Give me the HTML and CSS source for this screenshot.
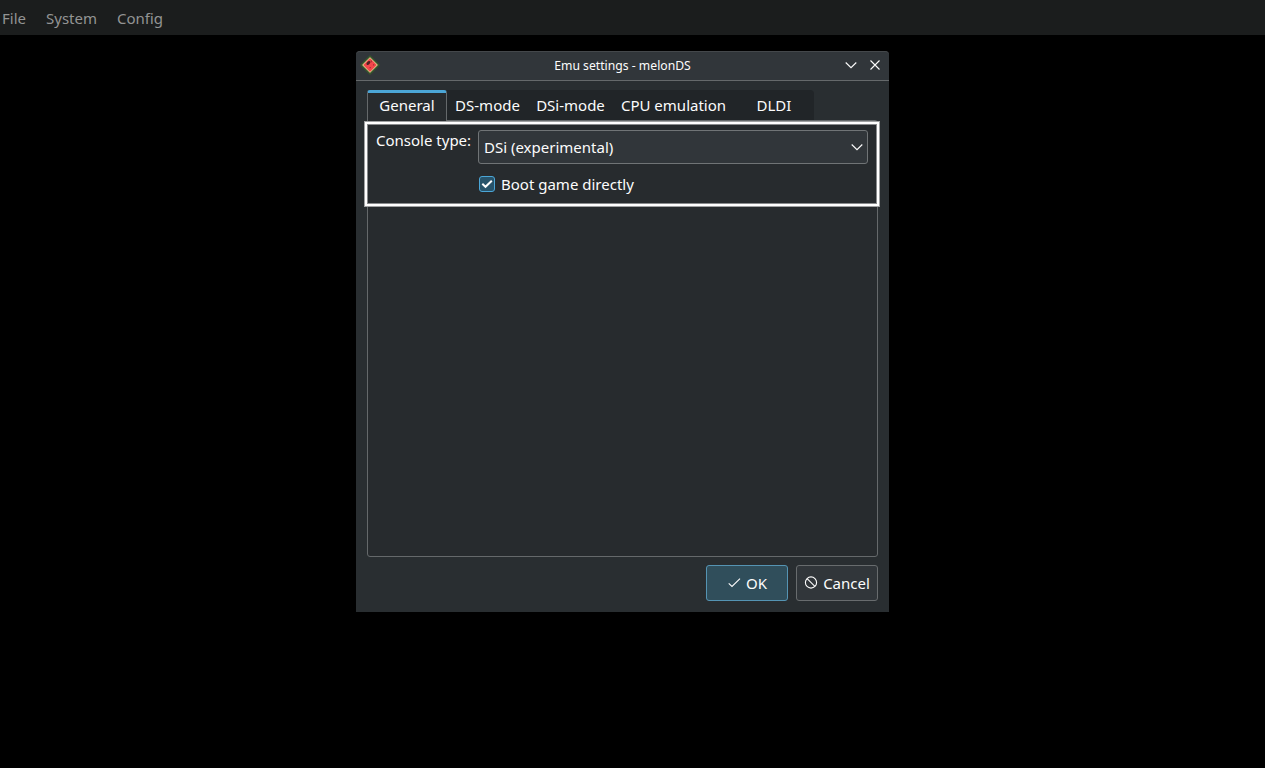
FILE: index.html
```html
<!DOCTYPE html>
<html lang="en">
<head>
<meta charset="utf-8">
<title>Emu settings - melonDS</title>
<link rel="stylesheet" href="styles.css">
</head>
<body>
<nav class="menubar"><span>File</span><span>System</span><span>Config</span></nav>
<main class="window">
  <header class="titlebar">
    <svg class="logo" width="20" height="20" viewBox="0 0 20 20">
      <path d="M10 1 19 10 10 19 1 10Z" fill="#456a38" stroke="#36552c" stroke-width="1.6" stroke-linejoin="round"/>
      <path d="M10 2.9 17.1 10 10 17.1 2.9 10Z" fill="#dfc08a" stroke="#dfc08a" stroke-linejoin="round"/>
      <path d="M10 4.4 15.6 10 10 15.6 4.4 10Z" fill="#f3474b" stroke="#f3474b" stroke-width="1.6" stroke-linejoin="round"/>
      <path d="M11.3 5.6v1.6M13.6 9.2v1.2M9.6 12.6h1.2" stroke="#a52e33" stroke-width="1.2"/>
      <ellipse cx="8.4" cy="8" rx="2.3" ry="1.5" transform="rotate(-45 8.4 8)" fill="#4d2022"/>
    </svg>
    <h1 class="title">Emu settings - melonDS</h1>
    <div class="controls">
      <svg width="12" height="12" viewBox="0 0 12 12"><path d="M.7 3.5 6 8.7 11.3 3.5"/></svg>
      <svg width="12" height="12" viewBox="0 0 12 12"><path d="M1.5 1.5l9 9M10.5 1.5l-9 9"/></svg>
    </div>
  </header>
  <div class="tabs">
    <div class="tab active">General</div>
    <div class="tab ds">DS-mode</div>
    <div class="tab dsi">DSi-mode</div>
    <div class="tab cpu">CPU emulation</div>
    <div class="tab dldi">DLDI</div>
  </div>
  <section class="panel">
    <div class="highlight"></div>
    <div class="form">
      <label class="label">Console type:</label>
      <div class="select"><span>DSi (experimental)</span>
        <svg width="12" height="12" viewBox="0 0 12 12"><path d="M.7 3.5 6 8.7 11.3 3.5"/></svg>
      </div>
      <div class="check">
        <span class="box"><svg width="14" height="14" viewBox="0 0 14 14"><path d="M2.3 6.7 5.5 9.8 11.8 3.8"/></svg></span>
        <span>Boot game directly</span>
      </div>
    </div>
  </section>
  <footer class="actions">
    <div class="button ok"><svg width="14" height="14" viewBox="0 0 14 14"><path d="M1.7 7.3 5 10.5 13 2.7"/></svg>OK</div>
    <div class="button cancel"><svg width="14" height="14" viewBox="0 0 14 14"><circle cx="7" cy="6.5" r="5.6"/><path d="M3.1 2.6l7.8 7.8"/></svg>Cancel</div>
  </footer>
</main>
</body>
</html>
```
FILE: styles.css
```css
* { box-sizing: border-box; }
body {
  margin: 0;
  height: 768px;
  overflow: hidden;
  background: #000;
  color: #fcfcfc;
  font: 15px/20px "Noto Sans", sans-serif;
}
svg { display: block; flex: none; fill: none; stroke: #fcfcfc; stroke-width: 1.1; }
.menubar {
  display: flex;
  gap: 20px;
  height: 35px;
  padding: 8px 0 0 2px;
  background: #1b1d1d;
  color: #939494;
}
.window {
  width: 533px;
  height: 561px;
  margin: 16px 0 0 356px;
  background: #292e31;
  border-radius: 4px 4px 0 0;
}
.titlebar {
  display: grid;
  grid-template-columns: 56px 1fr 56px;
  align-items: start;
  height: 30px;
  padding: 3px 0 0 4px;
  background: #31363a;
  border-top: 1px solid #44484b;
  border-bottom: 1px solid #65696b;
  border-radius: 4px 4px 0 0;
}
.logo { stroke: none; }
.title {
  margin: 0 4px 0 0;
  padding-top: 1px;
  font-size: 12.2px;
  line-height: 19px;
  font-weight: 400;
  text-align: center;
}
.controls { display: flex; gap: 12px; padding: 4px 0 0 12px; }
.tabs {
  display: flex;
  width: 447px;
  height: 30px;
  margin: 9px 0 0 11px;
  background: #212528;
  border-radius: 4px 4px 0 0;
}
.tab { height: 30px; padding-top: 5px; text-align: center; white-space: nowrap; }
.active {
  position: relative;
  z-index: 1;
  width: 80px;
  height: 31px;
  padding-top: 2px;
  background: #272b2e;
  border: 1px solid #65696b;
  border-top: 3px solid #4ba6d7;
  border-bottom: 0;
  border-radius: 3px 3px 0 0;
}
.ds { width: 81px; }
.dsi { width: 85px; }
.cpu { width: 121px; }
.dldi { width: 80px; }
.panel {
  position: relative;
  width: 511px;
  height: 437px;
  margin-left: 11px;
  background: #272b2e;
  border: 1px solid #65696b;
  border-radius: 0 3px 3px 3px;
}
.highlight {
  position: absolute;
  z-index: 2;
  top: 0;
  left: -4px;
  width: 516px;
  height: 86px;
  border: 1px solid #a0a2a3;
  box-shadow: inset 0 0 0 2px #fff, inset 0 0 0 3px #898b8d;
}
.form {
  display: grid;
  grid-template-columns: 102px 390px;
  row-gap: 10px;
  padding: 9px 0 0 8px;
}
.select {
  display: flex;
  align-items: center;
  justify-content: space-between;
  height: 34px;
  padding: 0 4px 0 5px;
  background: #31363a;
  border: 1px solid #707476;
  border-radius: 3px;
}
.check {
  grid-column: 2;
  display: flex;
  align-items: center;
  gap: 6px;
  padding-left: 1px;
}
.box {
  width: 16px;
  height: 16px;
  background: #28536a;
  border: 1px solid #4ba6d7;
  border-radius: 3px;
}
.box svg { stroke-width: 2; }
.actions {
  display: flex;
  justify-content: flex-end;
  gap: 8px;
  padding: 8px 11px 0 0;
}
.button {
  display: flex;
  align-items: center;
  justify-content: center;
  gap: 5px;
  width: 82px;
  height: 36px;
  background: #31363a;
  border: 1px solid #686c6e;
  border-radius: 3px;
}
.ok { background: #304e5b; border-color: #5594b3; }
```
